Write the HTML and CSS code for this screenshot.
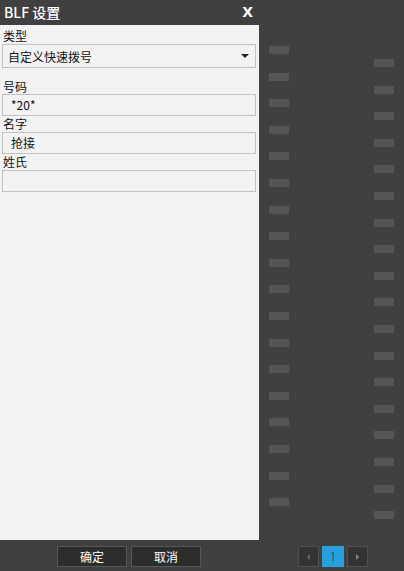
FILE: index.html
```html
<!DOCTYPE html>
<html lang="zh-CN">
<head>
    <meta charset="UTF-8">
    <meta name="viewport" content="width=device-width, initial-scale=1.0">
    <title>BLF 设置</title>
    <link rel="stylesheet" href="styles.css">
</head>
<body>
    <div class="main">
        <div class="dialog">
            <div class="dialog-title">
                <span>BLF 设置</span>
                <span class="close">X</span>
            </div>
            <div class="dialog-body">
                <label class="field-label">类型</label>
                <div class="select">
                    <span>自定义快速拨号</span>
                    <span class="arrow"></span>
                </div>

                <label class="field-label first">号码</label>
                <div class="input">*20*</div>

                <label class="field-label">名字</label>
                <div class="input">抢接</div>

                <label class="field-label">姓氏</label>
                <div class="input"></div>
            </div>
        </div>

        <div class="keys">
            <div class="key-col">
                <div class="key"></div><div class="key"></div><div class="key"></div>
                <div class="key"></div><div class="key"></div><div class="key"></div>
                <div class="key"></div><div class="key"></div><div class="key"></div>
                <div class="key"></div><div class="key"></div><div class="key"></div>
                <div class="key"></div><div class="key"></div><div class="key"></div>
                <div class="key"></div><div class="key"></div><div class="key"></div>
            </div>
            <div class="key-col right">
                <div class="key"></div><div class="key"></div><div class="key"></div>
                <div class="key"></div><div class="key"></div><div class="key"></div>
                <div class="key"></div><div class="key"></div><div class="key"></div>
                <div class="key"></div><div class="key"></div><div class="key"></div>
                <div class="key"></div><div class="key"></div><div class="key"></div>
                <div class="key"></div><div class="key"></div><div class="key"></div>
            </div>
        </div>
    </div>

    <div class="footer">
        <div class="actions">
            <button class="btn">确定</button>
            <button class="btn">取消</button>
        </div>
        <div class="pager">
            <span class="page-btn prev"></span>
            <span class="page-btn active">1</span>
            <span class="page-btn next"></span>
        </div>
    </div>
</body>
</html>
```

FILE: styles.css
```css
* {
    margin: 0;
    padding: 0;
    box-sizing: border-box;
}

body {
    width: 404px;
    height: 571px;
    background-color: #404040;
    font-family: "Noto Sans CJK SC", "Noto Sans", sans-serif;
    font-size: 12px;
    color: #111;
    display: flex;
    flex-direction: column;
    overflow: hidden;
}

.main {
    display: flex;
    height: 540px;
}

.dialog {
    width: 259px;
    background-color: #f3f3f3;
    display: flex;
    flex-direction: column;
}

.dialog-title {
    height: 25px;
    background-color: #404040;
    color: #fff;
    font-size: 14px;
    font-weight: 500;
    display: flex;
    justify-content: space-between;
    align-items: center;
    padding: 0 6px 0 4px;
    line-height: 25px;
}

.close {
    font-family: "DejaVu Sans", sans-serif;
    font-weight: bold;
    font-size: 14px;
}

.dialog-body {
    padding: 3px 3px 0 2px;
    display: flex;
    flex-direction: column;
}

.field-label {
    display: block;
    height: 16px;
    line-height: 16px;
    padding-left: 1px;
}

.field-label.first {
    margin-top: 12px;
    height: 14px;
    line-height: 14px;
}

.select {
    height: 24px;
    border: 1px solid #c2c2c2;
    display: flex;
    align-items: center;
    justify-content: space-between;
    padding: 0 6px 0 5px;
}

.arrow {
    width: 0;
    height: 0;
    border-left: 4px solid transparent;
    border-right: 4px solid transparent;
    border-top: 4px solid #222;
}

.input {
    height: 22px;
    line-height: 20px;
    border: 1px solid #c2c2c2;
    padding-left: 8px;
}

.keys {
    flex: 1;
    display: flex;
    justify-content: space-between;
    padding: 0 10px 0 10px;
}

.key-col {
    display: flex;
    flex-direction: column;
    gap: 18.6px;
    padding-top: 46px;
}

.key-col.right {
    padding-top: 59px;
}

.key {
    width: 20px;
    height: 8px;
    background-color: #555;
}

.footer {
    height: 31px;
    display: flex;
    align-items: center;
    padding-top: 2px;
}

.actions {
    display: flex;
    gap: 4px;
    margin-left: 57px;
}

.btn {
    width: 70px;
    height: 21px;
    background-color: #2d2d2d;
    border: 1px solid #575757;
    color: #fff;
    font-family: "Noto Sans CJK SC", sans-serif;
    font-size: 12px;
    line-height: 19px;
}

.pager {
    display: flex;
    gap: 3px;
    margin-left: 97px;
}

.page-btn {
    width: 21px;
    height: 21px;
    border: 1px solid #505050;
    background-color: #333;
    display: flex;
    align-items: center;
    justify-content: center;
    font-family: "Noto Sans", sans-serif;
    font-size: 12px;
}

.page-btn.active {
    width: 22px;
    border: none;
    background-color: #28a0dc;
    color: #1a5a78;
}

.prev::before,
.next::before {
    content: "";
    width: 0;
    height: 0;
    border-top: 3px solid transparent;
    border-bottom: 3px solid transparent;
}

.prev::before {
    border-right: 3px solid #666;
}

.next::before {
    border-left: 3px solid #888;
}
```
